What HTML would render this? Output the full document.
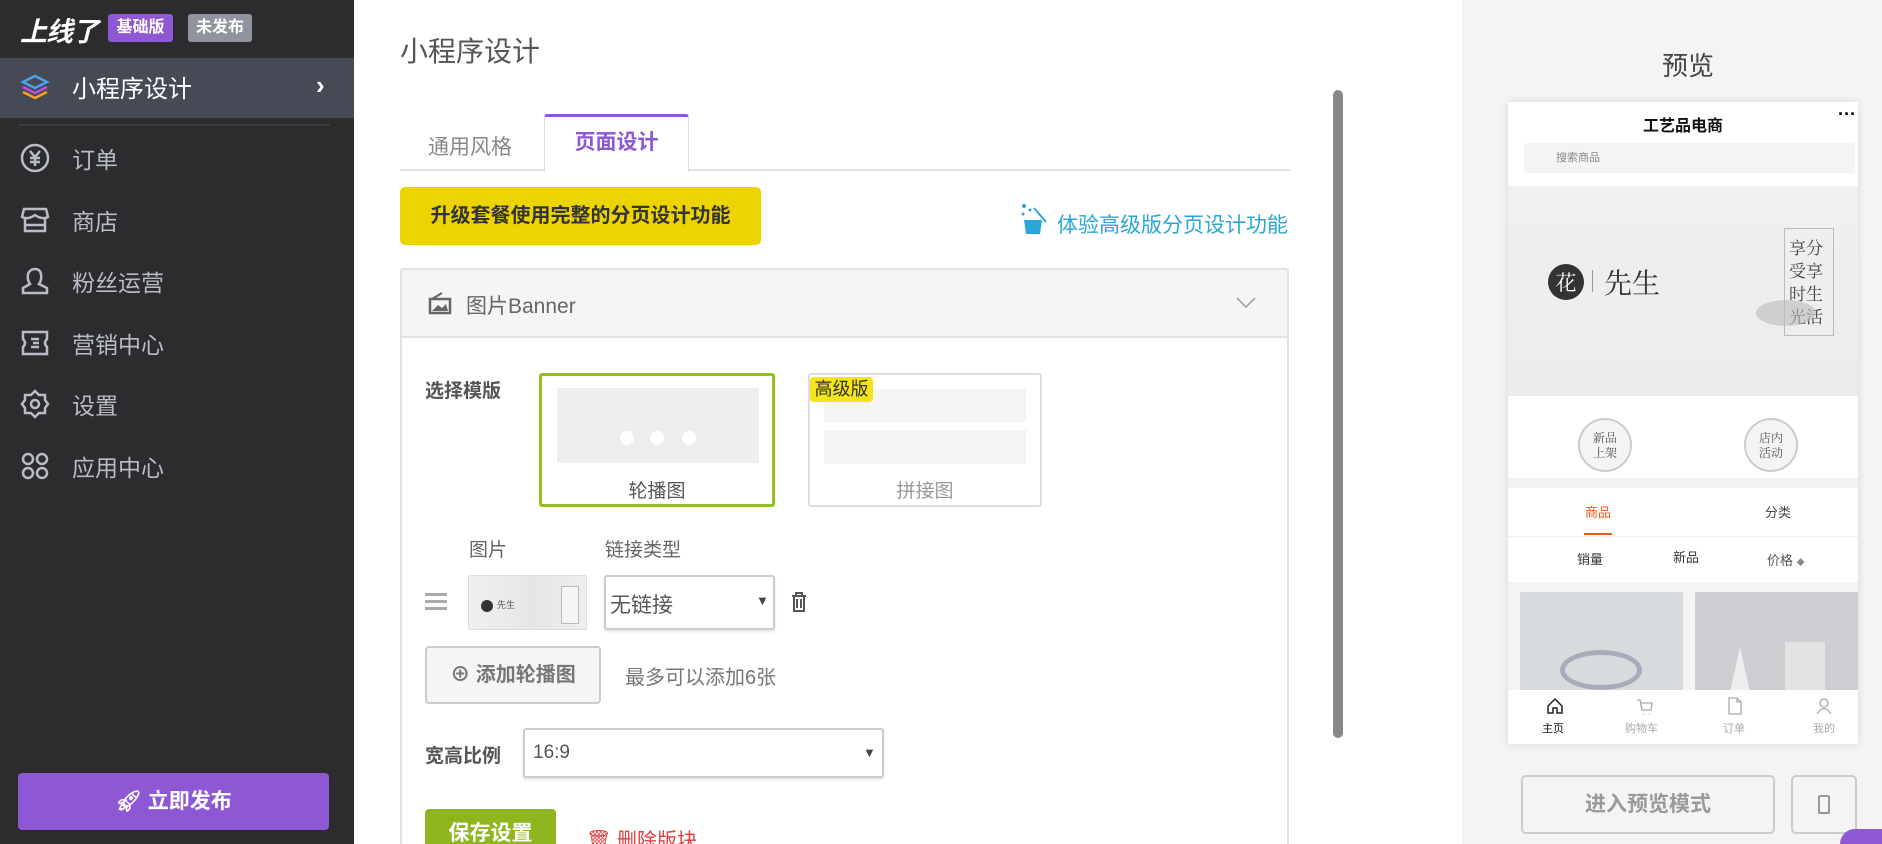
<!DOCTYPE html>
<html><head><meta charset="utf-8"><style>
*{box-sizing:border-box;margin:0;padding:0}
html{width:1882px;height:844px;overflow:hidden}
body{width:1882px;height:844px;overflow:hidden;position:relative;font-family:"Liberation Sans","Noto Sans CJK SC",sans-serif;background:#fff}
.a{position:absolute}
.side{left:0;top:0;width:354px;height:844px;background:#2c2c2e}
.nav{left:20px;color:#b8bcc6;font-size:23px;display:flex;align-items:center;gap:22px}
.nav svg{width:30px;height:30px}
.right{left:1462px;top:0;width:420px;height:844px;background:#f4f4f4}
.phone{left:1508px;top:102px;width:350px;height:642px;background:#fff;box-shadow:0 0 8px rgba(0,0,0,.12);overflow:hidden}
.c{text-align:center}
</style></head><body>
<div class="a side">
  <div class="a" style="left:20px;top:10px;color:#fff;font-size:27px;font-weight:bold;font-style:italic;letter-spacing:-1px">上线了</div>
  <div class="a" style="left:108px;top:14px;width:65px;height:28px;background:#8e58d4;color:#fff;font-size:16px;font-weight:bold;border-radius:3px;text-align:center;line-height:28px">基础版</div>
  <div class="a" style="left:188px;top:14px;width:64px;height:28px;background:#8f949e;color:#fff;font-size:16px;font-weight:bold;border-radius:3px;text-align:center;line-height:28px">未发布</div>
  <div class="a" style="left:0;top:58px;width:354px;height:60px;background:#464a54"></div>
  <div class="a nav" style="top:69px;color:#fff;font-size:24px">
    <svg viewBox="0 0 30 30"><path d="M15 4 L27 10 L15 16 L3 10Z" fill="none" stroke="#4aa3f0" stroke-width="2.5"/><path d="M3 15 L15 21 L27 15" fill="none" stroke="#c04ee0" stroke-width="2.5"/><path d="M3 20 L15 26 L27 20" fill="none" stroke="#f5a623" stroke-width="2.5"/></svg>小程序设计</div>
  <div class="a" style="left:316px;top:70px;color:#fff;font-size:26px;font-weight:bold">›</div>
  <div class="a" style="left:18px;top:124px;width:312px;height:2px;background:#3a3a3e"></div>
  <div class="a nav" style="top:141px"><svg viewBox="0 0 30 30"><circle cx="15" cy="15" r="13" fill="none" stroke="#b8bcc6" stroke-width="2.5"/><path d="M10 8 L15 14 L20 8 M15 14 V23 M10 15 H20 M10 19 H20" fill="none" stroke="#b8bcc6" stroke-width="2.5"/></svg>订单</div>
  <div class="a nav" style="top:203px"><svg viewBox="0 0 30 30"><path d="M4 4 H26 L28 12 Q22 15 15 10 Q8 15 2 12Z M5 13 V26 H25 V13 M5 20 H25" fill="none" stroke="#b8bcc6" stroke-width="2.5"/></svg>商店</div>
  <div class="a nav" style="top:264px"><svg viewBox="0 0 30 30"><path d="M3 27 V22 L10 18 Q7 14 8 8 Q10 3 15 3 Q20 3 21 8 Q22 14 19 18 L27 22 V27Z" fill="none" stroke="#b8bcc6" stroke-width="2.5"/></svg>粉丝运营</div>
  <div class="a nav" style="top:326px"><svg viewBox="0 0 30 30"><path d="M3 4 H27 V11 Q23 15 27 19 V26 H3 V19 Q7 15 3 11Z M11 11 H19 M11 19 H19 M13 15 H19" fill="none" stroke="#b8bcc6" stroke-width="2.5"/></svg>营销中心</div>
  <div class="a nav" style="top:387px"><svg viewBox="0 0 30 30"><path d="M15 2 L19 6 L25 6 L25 11 L28 15 L25 19 L25 24 L19 24 L15 28 L11 24 L5 24 L5 19 L2 15 L5 11 L5 6 L11 6Z" fill="none" stroke="#b8bcc6" stroke-width="2.5"/><circle cx="15" cy="15" r="4" fill="none" stroke="#b8bcc6" stroke-width="2.5"/></svg>设置</div>
  <div class="a nav" style="top:449px"><svg viewBox="0 0 30 30"><g fill="none" stroke="#b8bcc6" stroke-width="2.5"><circle cx="8" cy="8" r="5"/><circle cx="22" cy="8" r="5"/><circle cx="8" cy="22" r="5"/><circle cx="22" cy="22" r="5"/></g></svg>应用中心</div>
  <div class="a" style="left:18px;top:773px;width:311px;height:57px;background:#8e58d4;border-radius:4px;color:#fff;font-size:21px;font-weight:bold;text-align:center;line-height:57px">🚀&#xFE0E; 立即发布</div>
</div>

<div class="a" style="left:400px;top:30px;font-size:28px;color:#555">小程序设计</div>
<div class="a" style="left:1333px;top:90px;width:10px;height:648px;background:#888;border-radius:5px"></div>
<div class="a" style="left:400px;top:169px;width:890px;height:2px;background:#e2e2e2"></div>
<div class="a" style="left:428px;top:131px;font-size:21px;color:#888">通用风格</div>
<div class="a" style="left:544px;top:114px;width:145px;height:58px;background:#fff;border:1px solid #ddd;border-bottom:none;border-top:3px solid #8e58d4;border-radius:3px 3px 0 0;color:#8e58d4;font-size:21px;font-weight:bold;text-align:center;line-height:52px">页面设计</div>
<div class="a" style="left:400px;top:187px;width:361px;height:58px;background:#ecd400;border-radius:5px;font-size:20px;font-weight:bold;color:#333;text-align:center;line-height:58px">升级套餐使用完整的分页设计功能</div>
<svg class="a" style="left:1020px;top:202px" width="28" height="34" viewBox="0 0 28 34"><circle cx="4" cy="4" r="2" fill="#2ba6d8"/><circle cx="10" cy="8" r="1.5" fill="#2ba6d8"/><circle cx="3" cy="12" r="1.5" fill="#2ba6d8"/><path d="M14 6 L26 20" stroke="#2ba6d8" stroke-width="2"/><path d="M4 18 H22 L20 32 H6Z" fill="#2ba6d8"/></svg>
<div class="a" style="left:1057px;top:209px;color:#2ba6d8;font-size:21px">体验高级版分页设计功能</div>

<div class="a" style="left:400px;top:268px;width:889px;height:590px;border:2px solid #e2e2e2;border-radius:3px">
  <div style="height:68px;background:#f5f5f5;border-bottom:2px solid #e2e2e2;position:relative">
    <svg class="a" style="left:26px;top:21px" width="24" height="24" viewBox="0 0 24 24"><rect x="2" y="8" width="20" height="14" fill="none" stroke="#666" stroke-width="2.5"/><path d="M4 20 L10 14 L14 17 L18 13 L20 20Z" fill="#666"/><path d="M4 8 L14 2" stroke="#666" stroke-width="2"/></svg>
    <div class="a" style="left:64px;top:20px;font-size:21px;color:#666">图片Banner</div>
    <svg class="a" style="left:834px;top:26px" width="20" height="14" viewBox="0 0 20 14"><path d="M1 2 L10 11 L19 2" fill="none" stroke="#999" stroke-width="1.5"/></svg>
  </div>
</div>
<div class="a" style="left:425px;top:376px;font-size:19px;font-weight:bold;color:#555">选择模版</div>
<div class="a" style="left:539px;top:373px;width:236px;height:134px;border:3px solid #93c01f;border-radius:3px;background:#fff">
  <div class="a" style="left:15px;top:12px;width:202px;height:75px;background:#eee"></div>
  <div class="a" style="left:78px;top:55px;width:14px;height:14px;border-radius:50%;background:#fff"></div>
  <div class="a" style="left:108px;top:55px;width:14px;height:14px;border-radius:50%;background:#fff"></div>
  <div class="a" style="left:140px;top:55px;width:14px;height:14px;border-radius:50%;background:#fff"></div>
  <div class="a c" style="left:0;width:230px;top:100px;font-size:19px;color:#555">轮播图</div>
</div>
<div class="a" style="left:808px;top:373px;width:234px;height:134px;border:2px solid #ddd;border-radius:3px;background:#fff">
  <div class="a" style="left:14px;top:14px;width:202px;height:33px;background:#f4f4f4"></div>
  <div class="a" style="left:14px;top:55px;width:202px;height:34px;background:#f4f4f4"></div>
  <div class="a" style="left:0;top:2px;width:63px;height:25px;background:#f5e31c;border-radius:4px;font-size:18px;color:#333;text-align:center;line-height:25px">高级版</div>
  <div class="a c" style="left:0;width:230px;top:101px;font-size:19px;color:#999">拼接图</div>
</div>
<div class="a" style="left:469px;top:535px;font-size:19px;color:#666">图片</div>
<div class="a" style="left:605px;top:535px;font-size:19px;color:#666">链接类型</div>
<div class="a" style="left:425px;top:593px;width:22px;height:3px;background:#aaa;box-shadow:0 7px #aaa,0 14px #aaa"></div>
<div class="a" style="left:468px;top:575px;width:119px;height:55px;background:linear-gradient(90deg,#f0f0f0,#e6e6e6 55%,#eee);border:1px solid #ddd;border-radius:2px">
  <div class="a" style="left:12px;top:24px;width:12px;height:12px;border-radius:50%;background:#333"></div>
  <div class="a" style="left:28px;top:22px;font-size:9px;color:#555">先生</div>
  <div class="a" style="left:92px;top:10px;width:18px;height:38px;border:1px solid #bbb;background:#f5f5f5"></div>
</div>
<div class="a" style="left:604px;top:575px;width:171px;height:55px;border:2px solid #ccc;border-radius:3px;background:#fff;box-shadow:0 2px 2px rgba(0,0,0,.1)">
  <div class="a" style="left:4px;top:12px;font-size:21px;color:#555">无链接</div>
  <div class="a" style="left:150px;top:16px;font-size:13px;color:#444">▼</div>
</div>
<svg class="a" style="left:790px;top:591px" width="18" height="22" viewBox="0 0 18 22"><path d="M2 5 H16 M6 5 V2 H12 V5 M4 5 V20 H14 V5 M7 8 V17 M11 8 V17" fill="none" stroke="#555" stroke-width="2"/></svg>
<div class="a" style="left:425px;top:646px;width:176px;height:58px;background:#f5f5f5;border:2px solid #ccc;border-radius:4px;font-size:20px;font-weight:bold;color:#777;text-align:center;line-height:54px">⊕ 添加轮播图</div>
<div class="a" style="left:625px;top:661px;font-size:20px;color:#777">最多可以添加6张</div>
<div class="a" style="left:425px;top:741px;font-size:19px;font-weight:bold;color:#555">宽高比例</div>
<div class="a" style="left:523px;top:728px;width:361px;height:50px;border:2px solid #ccc;border-radius:3px;background:#fff;box-shadow:0 2px 2px rgba(0,0,0,.1)">
  <div class="a" style="left:8px;top:12px;font-size:19px;color:#555">16:9</div>
  <div class="a" style="left:338px;top:15px;font-size:13px;color:#444">▼</div>
</div>
<div class="a" style="left:425px;top:809px;width:131px;height:50px;background:#8fb51f;border-radius:4px;font-size:21px;font-weight:bold;color:#fff;text-align:center;line-height:50px">保存设置</div>
<div class="a" style="left:586px;top:824px;font-size:20px;color:#e04040">🗑&#xFE0E; 删除版块</div>

<div class="a right">
  <div class="a c" style="left:0;width:452px;top:46px;font-size:26px;color:#444">预览</div>
</div>
<div class="a phone">
  <div class="a c" style="left:0;width:350px;top:10px;font-size:16px;font-weight:bold;color:#111">工艺品电商</div>
  <div class="a" style="left:330px;top:2px;font-size:18px;font-weight:bold">···</div>
  <div class="a" style="left:16px;top:41px;width:331px;height:30px;background:#f4f4f4;border-radius:3px;font-size:11px;color:#888;line-height:30px;padding-left:32px">搜索商品</div>
  <div class="a" style="left:0;top:84px;width:350px;height:210px;background:linear-gradient(180deg,#f0f0f0,#ececec)">
    <div class="a" style="left:40px;top:78px;width:36px;height:36px;border-radius:50%;background:#333;color:#fff;font-size:21px;text-align:center;line-height:36px;font-family:'Noto Serif CJK SC',serif">花</div>
    <div class="a" style="left:84px;top:84px;width:1px;height:22px;background:#999"></div>
    <div class="a" style="left:96px;top:76px;font-size:28px;color:#333;font-family:'Noto Serif CJK SC',serif">先生</div>
    <div class="a" style="left:276px;top:42px;width:50px;height:108px;border:1px solid #bbb;font-size:17px;color:#444;line-height:23px;padding:6px 4px;font-family:'Noto Serif CJK SC',serif">享分<br>受享<br>时生<br>光活</div>
    <div class="a" style="left:248px;top:114px;width:60px;height:26px;background:#bbb;border-radius:50%;opacity:.6"></div>
  </div>
  <div class="a" style="left:70px;top:316px;width:54px;height:54px;border-radius:50%;border:2px solid #ccc;background:#f4f4f4;font-size:12px;color:#555;text-align:center;padding-top:10px;line-height:15px;font-family:'Noto Serif CJK SC',serif">新品<br>上架</div>
  <div class="a" style="left:236px;top:316px;width:54px;height:54px;border-radius:50%;border:2px solid #ccc;background:#f4f4f4;font-size:12px;color:#555;text-align:center;padding-top:10px;line-height:15px;font-family:'Noto Serif CJK SC',serif">店内<br>活动</div>
  <div class="a" style="left:0;top:376px;width:350px;height:10px;background:#f2f2f2"></div>
  <div class="a" style="left:77px;top:400px;font-size:13px;color:#f05a1a">商品</div>
  <div class="a" style="left:76px;top:431px;width:28px;height:2px;background:#f05a1a"></div>
  <div class="a" style="left:257px;top:400px;font-size:13px;color:#444">分类</div>
  <div class="a" style="left:0;top:434px;width:350px;height:1px;background:#eee"></div>
  <div class="a" style="left:69px;top:447px;font-size:13px;color:#333">销量</div>
  <div class="a" style="left:165px;top:445px;font-size:13px;color:#333">新品</div>
  <div class="a" style="left:259px;top:448px;font-size:13px;color:#555">价格 <span style="font-size:8px;color:#888">◆</span></div>
  <div class="a" style="left:0;top:480px;width:350px;height:120px;background:#f4f4f4"></div>
  <div class="a" style="left:12px;top:490px;width:163px;height:110px;background:#d8dbde;border-radius:2px">
    <div class="a" style="left:40px;top:58px;width:82px;height:40px;border:5px solid #aab;border-radius:50%"></div>
  </div>
  <div class="a" style="left:187px;top:490px;width:163px;height:110px;background:#ccced2;border-radius:2px">
    <div class="a" style="left:35px;top:55px;width:20px;height:45px;background:#eee;clip-path:polygon(50% 0,100% 100%,0 100%)"></div>
    <div class="a" style="left:90px;top:50px;width:40px;height:50px;background:#e8e8e8;opacity:.8"></div>
  </div>
  <div class="a" style="left:0;top:588px;width:350px;height:54px;background:#fff"></div>
  <svg class="a" style="left:38px;top:595px" width="18" height="18" viewBox="0 0 18 18"><path d="M2 9 L9 2 L16 9 V16 H11 V11 H7 V16 H2Z" fill="none" stroke="#222" stroke-width="1.5"/></svg>
  <div class="a" style="left:34px;top:618px;font-size:11px;color:#111">主页</div>
  <svg class="a" style="left:128px;top:596px" width="18" height="18" viewBox="0 0 18 18"><path d="M1 2 H4 L6 12 H15 L16 5 H5 M7 16 h1 M13 16 h1" fill="none" stroke="#aaa" stroke-width="1.3"/></svg>
  <div class="a" style="left:117px;top:618px;font-size:11px;color:#aaa">购物车</div>
  <svg class="a" style="left:219px;top:595px" width="16" height="18" viewBox="0 0 16 18"><path d="M2 1 H10 L14 5 V17 H2Z M10 1 V5 H14" fill="none" stroke="#aaa" stroke-width="1.3"/></svg>
  <div class="a" style="left:215px;top:618px;font-size:11px;color:#aaa">订单</div>
  <svg class="a" style="left:307px;top:595px" width="18" height="18" viewBox="0 0 18 18"><circle cx="9" cy="6" r="4" fill="none" stroke="#aaa" stroke-width="1.3"/><path d="M2 17 Q9 6 16 17" fill="none" stroke="#aaa" stroke-width="1.3"/></svg>
  <div class="a" style="left:305px;top:618px;font-size:11px;color:#aaa">我的</div>
</div>
<div class="a" style="left:1521px;top:775px;width:254px;height:59px;border:2px solid #ccc;border-radius:5px;font-size:21px;font-weight:bold;color:#999;text-align:center;line-height:55px">进入预览模式</div>
<div class="a" style="left:1791px;top:775px;width:66px;height:59px;border:2px solid #ccc;border-radius:5px"><div class="a" style="left:25px;top:18px;width:12px;height:19px;border:2px solid #999;border-radius:2px"></div></div>
<div class="a" style="left:1840px;top:829px;width:42px;height:15px;border-radius:30px 0 0 0;background:#8e58d4"></div>
</body></html>
